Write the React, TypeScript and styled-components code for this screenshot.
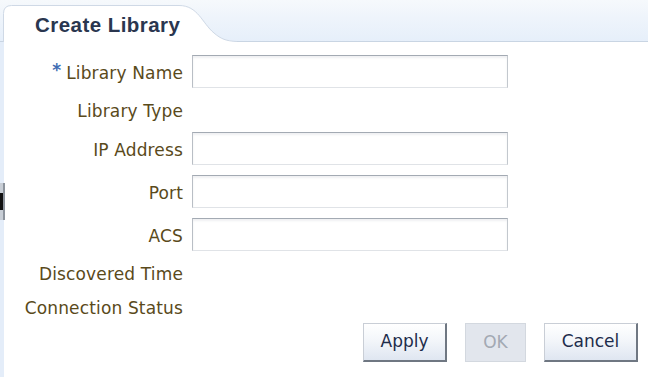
import React from "react";
import styled, { createGlobalStyle } from "styled-components";

const Global = createGlobalStyle`
  html, body { margin: 0; padding: 0; background: #ffffff; }
  body { font-family: "DejaVu Sans", Verdana, sans-serif; }
  * { box-sizing: border-box; }
`;

const Page = styled.div`
  width: 648px;
  height: 377px;
  display: flex;
  flex-direction: column;
  background: #ffffff;
  overflow: hidden;
`;

const TabStrip = styled.div`
  height: 42px;
  flex: none;
  display: flex;
  align-items: flex-end;
  background: linear-gradient(to bottom, #f6f9fc 0%, #eef4fb 45%, #e6effa 100%);
  border-bottom: 1px solid #c9d5e3;
  padding-left: 3px;
`;

const Tab = styled.div`
  position: relative;
  width: 234px;
  height: 37px;
  margin-bottom: -1px;
  display: flex;
  align-items: center;
  padding-left: 32px;
  padding-top: 2px;
`;

const TabShape = styled.svg`
  position: absolute;
  left: 0;
  top: 0;
  width: 234px;
  height: 37px;
`;

const TabTitle = styled.span`
  position: relative;
  font-family: "Liberation Sans", Arial, sans-serif;
  font-weight: bold;
  font-size: 20.5px;
  letter-spacing: 0.45px;
  color: #2a364f;
`;

const Body = styled.div`
  flex: 1;
  display: flex;
`;

const Rail = styled.div`
  width: 4px;
  flex: none;
  background: #e4edf9;
  display: flex;
  flex-direction: column;
`;

const Handle = styled.div`
  margin-top: 141px;
  height: 37px;
  width: 5px;
  background: linear-gradient(to bottom, #c8ced6 0%, #c8ced6 26%, #111 27%, #111 73%, #c8ced6 74%);
  border-right: 2px solid #8c939c;
`;

const Content = styled.div`
  flex: 1;
  display: flex;
  flex-direction: column;
  padding-top: 13px;
`;

const Form = styled.div`
  display: grid;
  grid-template-columns: 179px 316px;
  column-gap: 9px;
  row-gap: 10px;
  align-items: center;
`;

const Label = styled.div<{ $h?: number }>`
  height: ${(p) => p.$h ?? 24}px;
  display: flex;
  align-items: center;
  justify-content: flex-end;
  padding-top: 2px;
  font-size: 17px;
  letter-spacing: 0.15px;
  color: #5a4a1b;
  white-space: nowrap;
`;

const Req = styled.span`
  color: #3f6db3;
  font-size: 17px;
  font-weight: bold;
  margin-right: 5px;
  position: relative;
  top: -3px;
`;

const Input = styled.input`
  height: 33px;
  width: 316px;
  margin: 0;
  border-style: solid;
  border-width: 1px;
  border-color: #a3aab3 #c3c8ce #e0e3e7 #b9bec5;
  background: #ffffff;
  box-shadow: inset 0 2px 2px rgba(120, 130, 145, 0.12);
  font-family: inherit;
  font-size: 15px;
  outline: none;
`;

const Spacer = styled.div``;

const ButtonBar = styled.div`
  display: flex;
  justify-content: flex-end;
  gap: 18px;
  margin-top: 4px;
  padding-right: 10px;
`;

const Button = styled.button<{ $w: number; $disabled?: boolean }>`
  width: ${(p) => p.$w}px;
  height: 39px;
  margin: 0;
  padding: 0 0 2px 0;
  font-family: "DejaVu Sans", Verdana, sans-serif;
  font-size: 17px;
  color: ${(p) => (p.$disabled ? "#a3a9b3" : "#1d2c4b")};
  background: ${(p) =>
    p.$disabled
      ? "#e2e6ed"
      : "linear-gradient(to bottom, #ffffff 0%, #f3f6fa 45%, #dfe6f1 100%)"};
  border-style: solid;
  border-width: ${(p) => (p.$disabled ? "1px" : "1px 2px 2px 1px")};
  border-color: ${(p) =>
    p.$disabled ? "#d3d8df" : "#c9ced6 #6f7782 #6f7782 #c9ced6"};
  border-radius: 0;
`;

export default function App() {
  return (
    <>
      <Global />
      <Page>
        <TabStrip>
          <Tab>
            <TabShape viewBox="0 0 234 37">
              <path
                d="M0.5 37 L0.5 8.5 Q0.5 0.5 8.5 0.5 L176 0.5 C195 0.5 199 18 211 28 C218 34 223 36 234 36.5 L234 37 Z"
                fill="#ffffff"
                stroke="none"
              />
              <path
                d="M0.5 37 L0.5 8.5 Q0.5 0.5 8.5 0.5 L176 0.5 C195 0.5 199 18 211 28 C218 34 223 36 234 36.5"
                fill="none"
                stroke="#cfd9e6"
                strokeWidth="1"
              />
            </TabShape>
            <TabTitle>Create Library</TabTitle>
          </Tab>
        </TabStrip>
        <Body>
          <Rail>
            <Handle />
          </Rail>
          <Content>
            <Form>
              <Label $h={33}>
                <Req>*</Req>Library Name
              </Label>
              <Input />
              <Label>Library Type</Label>
              <Spacer />
              <Label $h={33}>IP Address</Label>
              <Input />
              <Label $h={33}>Port</Label>
              <Input />
              <Label $h={33}>ACS</Label>
              <Input />
              <Label>Discovered Time</Label>
              <Spacer />
              <Label>Connection Status</Label>
              <Spacer />
            </Form>
            <ButtonBar>
              <Button $w={84}>Apply</Button>
              <Button $w={61} $disabled disabled>
                OK
              </Button>
              <Button $w={94}>Cancel</Button>
            </ButtonBar>
          </Content>
        </Body>
      </Page>
    </>
  );
}
